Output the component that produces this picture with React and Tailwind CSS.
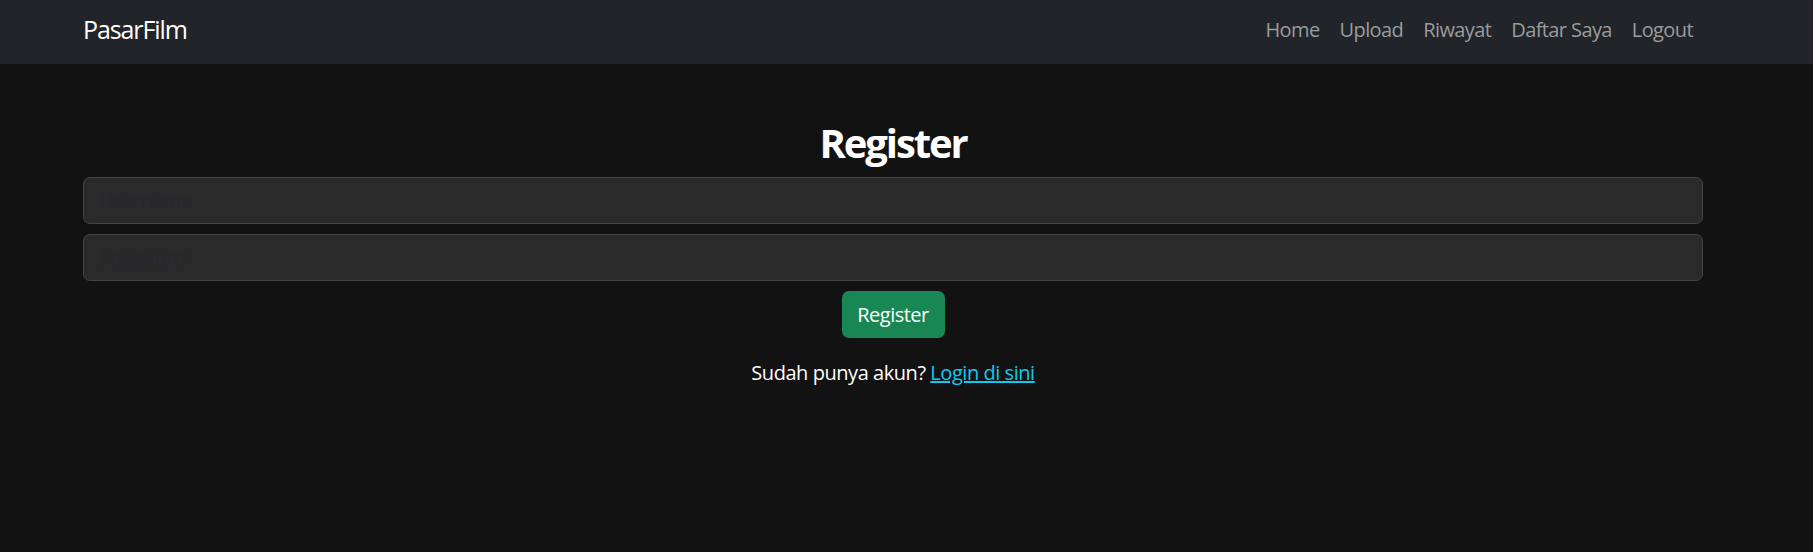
export default function App() {
  const links = ["Home", "Upload", "Riwayat", "Daftar Saya", "Logout"];
  return (
    <div className="min-h-[552px] bg-[#121212] text-white" style={{ fontFamily: '"Open Sans", "Noto Sans", sans-serif' }}>
      <nav className="h-[64px] bg-[#212529] flex items-center justify-between pl-[83px] pr-[110px] pb-[5px]">
        <a className="text-[25px] text-white leading-none tracking-[-1.1px]">PasarFilm</a>
        <div className="flex items-center">
          {links.map((l) => (
            <a key={l} className="px-[10px] text-[20px] text-[#9a9b9d] tracking-[-0.6px]">{l}</a>
          ))}
        </div>
      </nav>
      <main className="ml-[83px] w-[1620px] pt-[55px] flex flex-col items-center">
        <h2 className="text-[40px] font-bold leading-[48px] mb-[10px] tracking-[-2.1px]">Register</h2>
        <input
          placeholder="Username"
          className="w-full h-[47px] mb-[10px] px-[15px] text-[20px] tracking-[-0.5px] bg-[#2a2a2a] border border-[#444] rounded-[7px] placeholder:text-[#25282f] outline-none"
        />
        <input
          placeholder="Password"
          type="password"
          className="w-full h-[47px] mb-[10px] px-[15px] text-[20px] tracking-[-0.5px] bg-[#2a2a2a] border border-[#444] rounded-[7px] placeholder:text-[#25282f] outline-none"
        />
        <button className="h-[47px] w-[103px] bg-[#198754] rounded-[7px] text-[20px] tracking-[-0.5px] text-white">Register</button>
        <p className="mt-[20px] text-[20px] leading-[30px] tracking-[-0.45px]">
          Sudah punya akun? <a className="text-[#0dcaf0] underline">Login di sini</a>
        </p>
      </main>
    </div>
  );
}
